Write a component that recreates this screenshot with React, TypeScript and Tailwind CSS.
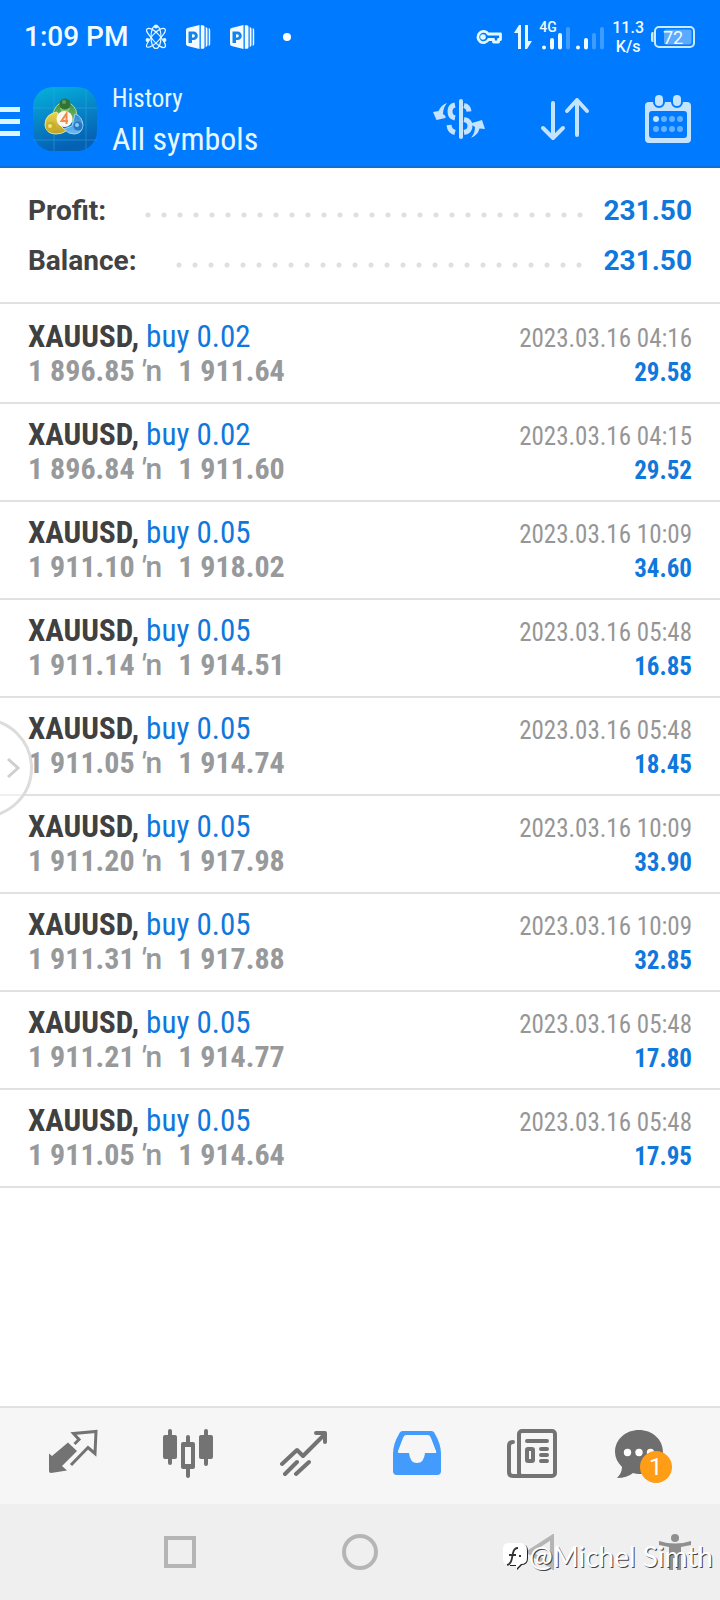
import React from 'react';

interface Deal {
  volume: string;
  open: string;
  close: string;
  time: string;
  profit: string;
}

const deals: Deal[] = [
  { volume: '0.02', open: '1 896.85', close: '1 911.64', time: '2023.03.16 04:16', profit: '29.58' },
  { volume: '0.02', open: '1 896.84', close: '1 911.60', time: '2023.03.16 04:15', profit: '29.52' },
  { volume: '0.05', open: '1 911.10', close: '1 918.02', time: '2023.03.16 10:09', profit: '34.60' },
  { volume: '0.05', open: '1 911.14', close: '1 914.51', time: '2023.03.16 05:48', profit: '16.85' },
  { volume: '0.05', open: '1 911.05', close: '1 914.74', time: '2023.03.16 05:48', profit: '18.45' },
  { volume: '0.05', open: '1 911.20', close: '1 917.98', time: '2023.03.16 10:09', profit: '33.90' },
  { volume: '0.05', open: '1 911.31', close: '1 917.88', time: '2023.03.16 10:09', profit: '32.85' },
  { volume: '0.05', open: '1 911.21', close: '1 914.77', time: '2023.03.16 05:48', profit: '17.80' },
  { volume: '0.05', open: '1 911.05', close: '1 914.64', time: '2023.03.16 05:48', profit: '17.95' },
];

const AtomIcon = () => (
  <svg width="22" height="26" viewBox="0 0 22 26" fill="none" stroke="#e4f8ff" strokeWidth="1.2">
    <path d="M11 1.500c3 0 5 5 5 11.500s-2 11.500-5 11.500-5-5-5-11.500S8 1.500 11 1.500z" />
    <path d="M2 5c2-2 8 1 12 6s8 10 6 12-8-2-12-7S0 7 2 5z" />
    <path d="M20 5c2 2-2 6-6 11s-10 8-12 7 2-7 6-12 10-8 12-6z" />
    <circle cx="11" cy="2.500" r="1.500" fill="#e4f8ff" />
    <circle cx="2.500" cy="16" r="1.300" fill="#e4f8ff" />
    <circle cx="19.500" cy="16" r="1.300" fill="#e4f8ff" />
  </svg>
);

const WpsIcon = () => (
  <svg width="26" height="26" viewBox="0 0 26 26" fill="#f2fcff">
    <path d="M2.500 4 14.500 1v24L2.500 22Q1 21.500 1 20V6q0-1.500 1.500-2z" />
    <path fillRule="evenodd" fill="#1484ec" d="M3.500 7.500h5a4.300 4.300 0 0 1 0 8.600H7V19H3.500zM7 10.200v3.200h1.300a1.600 1.600 0 0 0 0-3.200z" />
    <path d="M15.800 1.200H18q1.500 0 1.500 1.500v20.600q0 1.500-1.500 1.500h-2.200zM20.700 3q1.800.3 1.800 2v16q0 1.700-1.800 2zM23.700 4q1.500.5 1.500 2v14q0 1.500-1.500 2z" />
  </svg>
);

const KeyIcon = () => (
  <svg width="26" height="16" viewBox="0 0 26 16" fill="none" stroke="#e4f8ff" strokeWidth="2.800">
    <path d="M12.200 5H24.500v5.500h-2V13h-5v-2.500h-5a5.600 5.600 0 1 1-.3-5.500z" strokeLinejoin="round" />
    <circle cx="7" cy="8" r="1.400" />
  </svg>
);

const DataArrowsIcon = () => (
  <svg width="18" height="26" viewBox="0 0 18 26" fill="#e4f8ff">
    <path d="M5 1h2v24H4V9H0zM11 1h3v16h4l-5 8h-2z" />
  </svg>
);

const SignalIcon = () => (
  <svg width="66" height="28" viewBox="0 0 66 28" strokeWidth="4" strokeLinecap="round" stroke="#f0fbff">
    <path d="M5 24.500v.1M13 17v7.500M21 12v12.500M39 24.500v.1M47 17v7.500" />
    <path d="M29 6v18.500M55 12v12.500M63 6v18.500" stroke="#3f9cff" />
  </svg>
);

const BatteryIcon = () => (
  <svg width="44" height="22" viewBox="0 0 44 22">
    <rect x="4" y="1" width="39" height="20" rx="4" fill="none" stroke="#c9ebff" strokeWidth="2" />
    <rect x="13" y="3.500" width="27.500" height="15" rx="2" fill="#5caaff" />
    <path d="M2.500 6v10H1.500Q0 16 0 14V8q0-2 1.500-2z" fill="#c9ebff" />
  </svg>
);

const AppLogo = () => (
  <svg width="64" height="64" viewBox="0 0 64 64">
    <defs>
      <linearGradient id="tile" x1="0" y1="0" x2="0.3" y2="1">
        <stop offset="0" stopColor="#04b4dc" />
        <stop offset="0.55" stopColor="#0783c6" />
        <stop offset="1" stopColor="#0561b4" />
      </linearGradient>
      <linearGradient id="green" x1="0" y1="0" x2="0" y2="1">
        <stop offset="0" stopColor="#3f8f48" />
        <stop offset="1" stopColor="#79bd62" />
      </linearGradient>
      <linearGradient id="gold" x1="0" y1="0" x2="0" y2="1">
        <stop offset="0" stopColor="#e9d54c" />
        <stop offset="1" stopColor="#b9a02c" />
      </linearGradient>
      <linearGradient id="sky" x1="0" y1="0" x2="0" y2="1">
        <stop offset="0" stopColor="#2f87cf" />
        <stop offset="1" stopColor="#6bbcf0" />
      </linearGradient>
    </defs>
    <rect width="64" height="64" rx="20" fill="url(#tile)" />
    <path d="M21 0v64M53 2v60M0 21h64M0 53h64" stroke="#35a8df" strokeWidth="1" opacity="0.5" />
    <path d="M20 29a12 14 0 0 1 24 0l-5 6-7-9-7 9z" fill="url(#green)" stroke="#a5d58e" strokeWidth="1" />
    <path d="M24 25Q12 27 12 38q1 9 11 9 6 0 10-3l-6-6-1-6z" fill="url(#gold)" stroke="#f0e48a" strokeWidth="1" />
    <path d="M42 27q7 2 8 11-1 9-9 9-6 0-10-5l8-3z" fill="url(#sky)" stroke="#9cd4f7" strokeWidth="1" />
    <path d="M27 21h10l-2 5h-6z" fill="#8fc66c" />
    <circle cx="32" cy="17" r="5.500" fill="#2f7436" />
    <circle cx="31" cy="15" r="2" fill="#5f9f5c" />
    <circle cx="18" cy="40" r="5" fill="#c9ac28" />
    <circle cx="17" cy="39" r="2" fill="#f3e37c" />
    <circle cx="45" cy="39" r="4.500" fill="#2878c6" />
    <circle cx="44" cy="38" r="2" fill="#8ccbf4" />
    <circle cx="31.500" cy="32" r="8" fill="#fdf6ef" />
    <path d="M33.500 37V26.500L28.500 34H35" fill="none" stroke="#f08a4a" strokeWidth="2" />
  </svg>
);

const CurrencyIcon = () => (
  <svg width="52" height="42" viewBox="0 0 52 42" fill="none" stroke="#c3e3ff">
    <path d="M28 3v36" strokeWidth="4" strokeLinecap="round" />
    <path d="M22 7q-5 1-5 6.500t5 6.500M31 7.500q4.500 1 5 6M16 27q.5 6 6 7.500M31 21.500q6 1 6 6.500t-6 6.500" strokeWidth="5" />
    <path d="M14 5Q8 7 5.500 13L0 14l3.500 8 9-2v-2l-2.500-2Q10 10 14 5zM38 40q7-3 8.500-9.500L52 31l-3-9-10 3v2l3 2q0 6-4 11z" fill="#c3e3ff" stroke="none" />
  </svg>
);

const SortIcon = () => (
  <svg width="52" height="44" viewBox="0 0 52 44" fill="none" stroke="#c3e3ff" strokeWidth="4" strokeLinecap="round" strokeLinejoin="round">
    <path d="M14 6v35M4 31l10 10 10-10M38 38V3M28 14 38 3l10 11" />
  </svg>
);

const CalendarIcon = () => (
  <svg width="46" height="48" viewBox="0 0 46 48">
    <rect y="7" width="46" height="41" rx="4" fill="#c3e3ff" />
    <rect x="4" y="16" width="38" height="27" rx="3" fill="#007aff" />
    <rect x="9" y="-1" width="10" height="13" rx="5" fill="#c3e3ff" stroke="#007aff" strokeWidth="2" />
    <rect x="27" y="-1" width="10" height="13" rx="5" fill="#c3e3ff" stroke="#007aff" strokeWidth="2" />
    <g fill="#62b0ff">
      <circle cx="11" cy="24" r="3" fill="#c3e3ff" />
      <circle cx="19" cy="24" r="3" />
      <circle cx="27" cy="24" r="3" />
      <circle cx="35" cy="24" r="3" />
      <circle cx="11" cy="34" r="3" />
      <circle cx="19" cy="34" r="3" />
      <circle cx="27" cy="34" r="3" />
      <circle cx="35" cy="34" r="3" />
    </g>
  </svg>
);

const QuotesIcon = () => (
  <svg width="50" height="50" viewBox="0 0 50 50">
    <path d="M1 24.500 4 27 20 13.500 29 22 14 37l5 4.500L3 44q-2 0-2-2z" fill="#737373" />
    <path d="M26.500 15 31 10.500l-5.500-6L48 2.500 47 24.500l-7-6-17 17.500" fill="none" stroke="#737373" strokeWidth="3" />
  </svg>
);

const ChartIcon = () => (
  <svg width="50" height="50" viewBox="0 0 50 50" fill="#737373">
    <rect y="6" width="14" height="24" rx="2" />
    <path d="M7 2v32M25 8v6M25 38v9M43 2v33" stroke="#737373" strokeWidth="4" strokeLinecap="round" />
    <rect x="36" y="6" width="14" height="24" rx="2" />
    <path fillRule="evenodd" d="M20 13h10q2 0 2 2v23q0 2-2 2H20q-2 0-2-2V15q0-2 2-2zM22 18v17h6V18z" />
  </svg>
);

const TradeIcon = () => (
  <svg width="48" height="50" viewBox="0 0 48 50" fill="none" stroke="#737373" strokeWidth="4" strokeLinecap="round" strokeLinejoin="round">
    <path d="M3 35 18 21l6 6L46 5M37 4h9v9M6 45 18 33M17 45 30 33" />
  </svg>
);

const HistoryIcon = () => (
  <svg width="50" height="50" viewBox="0 0 50 50">
    <path
      fillRule="evenodd"
      fill="#429bfd"
      d="M11 2h28q3 0 4 3 6 10 6 20v17q0 4-4 4H5q-4 0-4-4V25Q1 15 7 5q1-3 4-3zM14 6q-2 0-3 3L6 22q-.5 2 1 2h10q1 10 8 10t8-10h10q2 0 1-2L39 9q-1-3-3-3z"
    />
  </svg>
);

const NewsIcon = () => (
  <svg width="50" height="50" viewBox="0 0 50 50" fill="none" stroke="#737373" strokeWidth="4" strokeLinecap="round">
    <rect x="12" y="2" width="36" height="45" rx="3" />
    <path d="M6 13q-4 0-4 4v26q0 4 4 4h12" />
    <path d="M20 12h20M34 20h6M34 26h6M34 32h6" />
    <rect x="20" y="20" width="6" height="12" rx="1" />
  </svg>
);

const ChatIcon = () => (
  <svg width="50" height="50" viewBox="0 0 50 50">
    <path d="M24 1c13 0 24 9 24 22S37 45 24 45q-3 0-6-1-6 5-16 5 5-5 5-11Q0 31 0 23C0 10 11 1 24 1z" fill="#6e6e6e" />
    <circle cx="12.500" cy="23.500" r="3.700" fill="#fff" />
    <circle cx="24" cy="23.500" r="3.700" fill="#fff" />
    <circle cx="35.500" cy="23.500" r="3.700" fill="#fff" />
  </svg>
);

const tabs = [
  { label: 'Quotes', icon: <QuotesIcon /> },
  { label: 'Chart', icon: <ChartIcon /> },
  { label: 'Trade', icon: <TradeIcon /> },
  { label: 'History', icon: <HistoryIcon /> },
  { label: 'News', icon: <NewsIcon /> },
];

const StatusBar = () => (
  <div className="flex h-[72px] items-center justify-between pt-0.5 pr-[25px] pl-6 text-[#f2fcff]">
    <div className="flex items-center">
      <span className="text-[28px] font-medium">1:09 PM</span>
      <div className="ml-[17px] flex items-center gap-[18px]">
        <AtomIcon />
        <WpsIcon />
        <WpsIcon />
      </div>
      <span className="ml-7 size-2 rounded-full bg-white" />
    </div>
    <div className="flex items-center">
      <KeyIcon />
      <div className="ml-3 flex items-center gap-[7px]">
        <DataArrowsIcon />
        <div className="relative">
          <SignalIcon />
          <span className="absolute left-0 -top-1 text-[14px] leading-4 font-medium">4G</span>
        </div>
        <div className="text-center text-[16px] leading-[19px] font-medium">
          <div>11.3</div>
          <div>K/s</div>
        </div>
        <div className="relative">
          <BatteryIcon />
          <span className="absolute inset-0 flex items-center justify-center text-[18px]">72</span>
        </div>
      </div>
    </div>
  </div>
);

const Header = () => (
  <header className="bg-[#007aff]">
    <StatusBar />
    <div className="flex h-24 items-center border-b-2 border-[#0b6fd8] pr-[29px]">
      <button aria-label="Menu" className="mt-1 flex flex-col gap-[7px]">
        <span className="h-[5px] w-5 bg-[#dcf5ff]" />
        <span className="h-[5px] w-5 bg-[#dcf5ff]" />
        <span className="h-[5px] w-5 bg-[#dcf5ff]" />
      </button>
      <div className="ml-[13px]">
        <AppLogo />
      </div>
      <div className="ml-[15px] flex-1 font-['Roboto_Condensed','Liberation_Sans_Narrow',Roboto,sans-serif] text-[#e6f8ff]">
        <div className="text-[25px] leading-[40px]">History</div>
        <h1 className="text-[32px] leading-[40px]">All symbols</h1>
      </div>
      <div className="flex items-center gap-[54px]">
        <button aria-label="Currency"><CurrencyIcon /></button>
        <button aria-label="Sort"><SortIcon /></button>
        <button aria-label="Period"><CalendarIcon /></button>
      </div>
    </div>
  </header>
);

const SummaryRow: React.FC<{ label: string; value: string }> = ({ label, value }) => (
  <div className="flex h-[50px] items-center text-[28px]">
    <dt className="font-bold text-[#424242]">{label}</dt>
    <div className="ml-[34px] mr-4 mt-2 h-[6px] flex-1 bg-[radial-gradient(circle,#dfdfdf_2px,transparent_3px)] bg-[length:16px_6px] bg-repeat-x" />
    <dd className="font-bold text-[#1078dc]">{value}</dd>
  </div>
);

const DealRow: React.FC<{ deal: Deal }> = ({ deal }) => (
  <li className="border-b-2 border-[#e1e1e1] px-7 py-[14px] font-['Roboto_Condensed','Liberation_Sans_Narrow',Roboto,sans-serif] leading-[34px]">
    <div className="flex h-[34px] items-baseline justify-between">
      <span className="text-[31px]">
        <b className="text-[#404040]">XAUUSD,</b> <span className="text-[#1078dc]">buy {deal.volume}</span>
      </span>
      <span className="text-[25px] text-[#969696]">{deal.time}</span>
    </div>
    <div className="flex h-[34px] items-baseline justify-between font-bold">
      <span className="flex items-baseline text-[30px] text-[#97999b]">
        {deal.open}
        <span className="ml-1.5 mr-4 font-[Roboto] font-medium"><i>′</i>n</span>
        {deal.close}
      </span>
      <span className="text-[25px] text-[#1078dc]">{deal.profit}</span>
    </div>
  </li>
);

const SystemNav = () => (
  <div className="relative grid h-24 grid-cols-[1fr_2fr_2fr_2fr_1fr] place-items-center bg-[#efefef]">
    <button aria-label="Recents" className="col-start-2 size-8 border-4 border-[#b5b5b5]" />
    <button aria-label="Home" className="size-9 rounded-full border-4 border-[#b5b5b5]" />
    <button aria-label="Back">
      <svg width="28" height="36" viewBox="0 0 28 36" fill="none" stroke="#b5b5b5" strokeWidth="4">
        <path d="M26 3v30L3 18z" />
      </svg>
    </button>
    <button aria-label="Accessibility">
      <svg width="32" height="36" viewBox="0 0 32 36" fill="#8f8f8f">
        <circle cx="16" cy="4" r="4" />
        <path d="M0 7q16 5 32 0v4l-10 2v23h-4V24h-4v12h-4V13L0 11z" />
      </svg>
    </button>
    <div className="absolute right-[7px] bottom-7 flex items-center gap-px text-white">
      <svg width="25" height="28" viewBox="0 0 25 28">
        <path d="M7 2h11q7 0 7 7v7q0 7-6 7l-5 5v-4H7z" fill="#222" />
        <path d="M6 1h11q7 0 7 7v8q0 6-6 6l-5 5v-4H6q-6 0-6-6V7q0-6 6-6z" fill="#fff" />
        <path d="M4 23q4-1 5-7l1-5q1-5 5-5M6 13h7M16 14h2" fill="none" stroke="#333" strokeWidth="1.800" />
      </svg>
      <span className="font-[Lato] text-[28px] leading-8 [text-shadow:1px_1px_0_#444]">@Michel Simth</span>
    </div>
  </div>
);

export default function App() {
  return (
    <div className="relative flex min-h-screen flex-col overflow-hidden bg-white font-[Roboto,sans-serif]">
      <Header />

      <dl className="border-b-2 border-[#e1e1e1] px-7 pt-[18px] pb-4">
        <SummaryRow label="Profit:" value="231.50" />
        <SummaryRow label="Balance:" value="231.50" />
      </dl>

      <ul className="flex-1 pt-0.5">
        {deals.map((deal, idx) => (
          <DealRow key={idx} deal={deal} />
        ))}
      </ul>

      {/* Edge panel handle */}
      <button
        aria-label="Open side panel"
        className="absolute top-[718px] -left-[67px] flex size-[100px] items-center justify-end rounded-full border-[3px] border-[#dcdcdc] bg-white/50 pr-2.5"
      >
        <svg width="14" height="22" viewBox="0 0 14 22" fill="none" stroke="#cfcfcf" strokeWidth="3">
          <path d="M2 2 12 11 2 20" />
        </svg>
      </button>

      <nav className="grid h-[98px] grid-cols-6 items-center border-t-2 border-[#e1e1e1] bg-[#f6f6f6] px-4 pb-1">
        {tabs.map((tab) => (
          <button key={tab.label} aria-label={tab.label} className="flex justify-center">
            {tab.icon}
          </button>
        ))}
        <button aria-label="Messages" className="flex justify-center">
          <span className="relative pr-[14px]">
            <ChatIcon />
            <span className="absolute right-[7px] -bottom-1 flex size-8 items-center justify-center rounded-full bg-[#ff9d17] text-[24px] leading-8 text-white">
              1
            </span>
          </span>
        </button>
      </nav>

      <SystemNav />
    </div>
  );
}
